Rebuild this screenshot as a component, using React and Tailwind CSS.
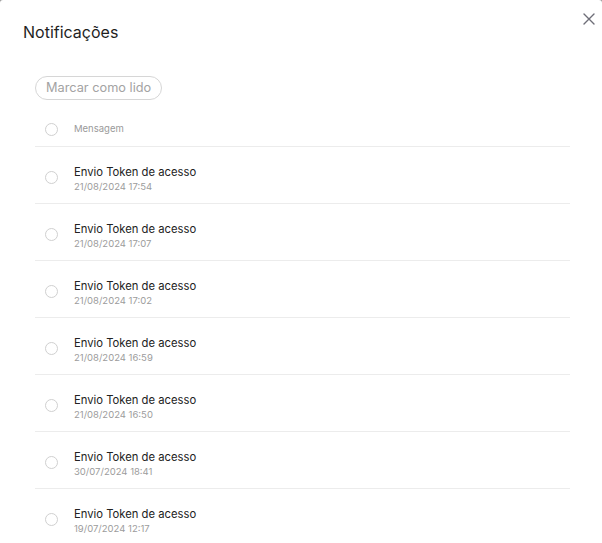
import React from "react";

const rows = [
  "21/08/2024 17:54",
  "21/08/2024 17:07",
  "21/08/2024 17:02",
  "21/08/2024 16:59",
  "21/08/2024 16:50",
  "30/07/2024 18:41",
  "19/07/2024 12:17",
];

function Check() {
  return <span className="block w-[13px] h-[13px] rounded-full border border-[#d0d0d0] bg-white" />;
}

export default function App() {
  return (
    <div className="w-[602px] h-[543px] bg-[#9a9a9a] overflow-hidden" style={{ fontFamily: "Inter, 'Noto Sans', sans-serif" }}>
      <div className="relative w-[602px] h-[543px] bg-white rounded-t-[3px] pl-[35px] pr-[32px]">
        <button className="absolute right-[6px] top-[12px] w-[14px] h-[14px] text-[#6e6e78]">
          <svg viewBox="0 0 14 14" width="14" height="14" fill="none" stroke="currentColor" strokeWidth="1.4" strokeLinecap="round">
            <path d="M2 2 L12 12 M12 2 L2 12" />
          </svg>
        </button>
        <h1 className="ml-[-12px] pt-[21px] text-[16px] leading-[22px] text-[#1f1f1f] font-normal">Notificações</h1>
        <div className="mt-[31px]">
          <span className="inline-flex items-center h-[24px] px-[10px] rounded-full border border-[#d6d6d6] text-[12.75px] text-[#a3a3a3]">
            Marcar como lido
          </span>
        </div>
        <div className="mt-[13px]">
          <div className="flex items-center h-[34px] border-b border-[#ececec]">
            <div className="w-[39px] pl-[10px]"><Check /></div>
            <span className="text-[9.5px] text-[#9a9a9a]">Mensagem</span>
          </div>
          {rows.map((d, i) => (
            <div key={i} className="flex items-center h-[57px] border-b border-[#ececec]">
              <div className="w-[39px] pl-[10px] pt-[6px]"><Check /></div>
              <div className="flex flex-col pt-[10px]">
                <span className="text-[11.25px] leading-[15px] text-[#222]">Envio Token de acesso</span>
                <span className="text-[9.5px] leading-[14px] text-[#9c9c9c]">{d}</span>
              </div>
            </div>
          ))}
        </div>
      </div>
    </div>
  );
}
